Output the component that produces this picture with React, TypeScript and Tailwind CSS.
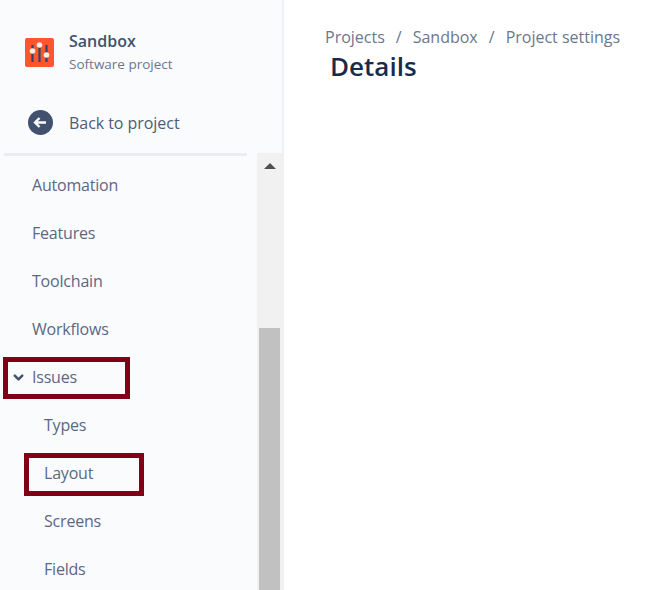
import { ChevronDown } from "lucide-react";

const topItems = ["Automation", "Features", "Toolchain", "Workflows"];
const subItems = ["Types", "Layout", "Screens", "Fields"];

function ProjectIcon() {
  return (
    <svg width="29" height="29" viewBox="0 0 29 29" className="shrink-0">
      <rect width="29" height="29" rx="2" fill="#ff5630" />
      <path d="M7.5 7v17M14.5 6v18M21.5 7v17" stroke="#344563" strokeWidth="2.2" />
      <circle cx="7.5" cy="13" r="2.8" fill="#ffebe6" />
      <circle cx="14.5" cy="7" r="2.8" fill="#ffebe6" />
      <circle cx="21.5" cy="17" r="2.8" fill="#ffebe6" />
    </svg>
  );
}

function BackIcon() {
  return (
    <svg width="25" height="25" viewBox="0 0 25 25" className="shrink-0">
      <circle cx="12.5" cy="12.5" r="12.5" fill="#42526e" />
      <path d="M7 12.5h11M11.5 8l-4.5 4.5 4.5 4.5" stroke="#fafbfc" strokeWidth="2.4" fill="none" />
    </svg>
  );
}

export default function App() {
  return (
    <div className="flex h-[590px] w-[648px] overflow-hidden bg-white font-['Open_Sans','Noto_Sans',sans-serif]">
      {/* Sidebar */}
      <div className="flex h-full w-[284px] shrink-0 flex-col border-r-2 border-[#f0f1f3] bg-[#fafbfd]">
        <div className="flex h-[153px] flex-col">
          <div className="flex items-center gap-[15px] pl-[25px] pt-[29px]">
            <ProjectIcon />
            <div>
              <p className="text-[16px] leading-[24px] font-semibold text-[#42526e]">Sandbox</p>
              <p className="text-[13.5px] leading-[22px] text-[#6b778c]">Software project</p>
            </div>
          </div>
          <div className="mt-[35px] flex items-center gap-[16px] pl-[28px]">
            <BackIcon />
            <span className="text-[16px] leading-[24px] tracking-[-0.05px] text-[#4d5d78]">Back to project</span>
          </div>
        </div>

        <div className="relative flex min-h-0 flex-1">
          <div className="w-[253px] shrink-0">
            <div className="ml-1 h-[3px] w-[243px] bg-[#ebecf0]" />
            <div className="pt-[5px]">
              {topItems.map((item) => (
                <div key={item} className="flex h-12 items-center pl-[32px] text-[16px] tracking-[-0.2px] text-[#5a6883]">
                  {item}
                </div>
              ))}
              <div className="flex h-12 items-center text-[16px] tracking-[-0.2px] text-[#5a6883]">
                <ChevronDown size={15} strokeWidth={4} className="ml-[11px] mr-[6px] text-[#42526e]" />
                Issues
              </div>
              {subItems.map((item) => (
                <div key={item} className="flex h-12 items-center pl-[44px] text-[16px] tracking-[-0.2px] text-[#5a6883]">
                  {item}
                </div>
              ))}
            </div>
          </div>

          {/* Scrollbar */}
          <div className="ml-1 flex w-[25px] shrink-0 flex-col bg-[#f1f1f1] px-[2px]">
            <div className="flex h-[175px] justify-center pt-[10px]">
              <div className="h-0 w-0 border-x-[6px] border-b-[6px] border-x-transparent border-b-[#505050]" />
            </div>
            <div className="flex-1 bg-[#c1c1c1]" />
          </div>

          {/* Red annotation boxes */}
          <div className="absolute left-[3px] top-[204px] h-[42px] w-[127px] border-[5px] border-[#800018]" />
          <div className="absolute left-[24px] top-[300px] h-[43px] w-[120px] border-[5px] border-[#800018]" />
        </div>
      </div>

      {/* Main content */}
      <div className="flex-1 pl-[41px] pt-[25px]">
        <div className="flex items-center text-[16px] leading-[24px] text-[#6b778c]">
          <span>Projects</span>
          <span className="mx-[11px]">/</span>
          <span>Sandbox</span>
          <span className="mx-[11px]">/</span>
          <span>Project settings</span>
        </div>
        <h1 className="pl-[5px] text-[26px] leading-[35px] font-semibold text-[#172b4d]">Details</h1>
      </div>
    </div>
  );
}
